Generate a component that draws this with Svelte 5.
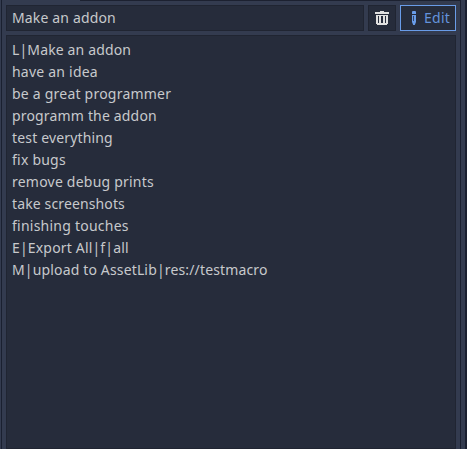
<script>
  let title = $state('Make an addon');
  const lines = [
    { text: 'L|Make an addon', tracking: 0.14 },
    { text: 'have an idea', tracking: 0.22 },
    { text: 'be a great programmer', tracking: 0.22 },
    { text: 'programm the addon', tracking: 0.17 },
    { text: 'test everything', tracking: 0.16 },
    { text: 'fix bugs', tracking: 0.23 },
    { text: 'remove debug prints', tracking: 0.22 },
    { text: 'take screenshots', tracking: 0.13 },
    { text: 'finishing touches', tracking: 0.24 },
    { text: 'E|Export All|f|all', tracking: 0.17 },
    { text: 'M|upload to AssetLib|res://testmacro', tracking: 0.15 }
  ];
</script>

<div class="window">
  <main class="dock">
    <div class="toolbar">
      <div class="field">{title}</div>
      <button class="delete" aria-label="Delete">
        <svg width="14" height="14" viewBox="0 0 14 14" shape-rendering="crispEdges">
          <path fill="#e0e0e0" fill-rule="evenodd" d="M5 0h4v1h5v2H0V1h5zM1 4h12v9h-1v1H2v-1H1zM3 5v7h1V5zM6 5v7h2V5zM10 5v7h1V5z" />
        </svg>
      </button>
      <button class="edit">
        <svg width="4" height="14" viewBox="0 0 4 14">
          <path fill="#699ce8" d="M1 0h2a1 1 0 0 1 1 1v2H0V1a1 1 0 0 1 1-1zM0 4h4v7l-1.2 3H1.2L0 11z" />
          <path fill="#262c3b" fill-opacity="0.75" d="M1 5h1v5H1z" />
        </svg>
        <span>Edit</span>
      </button>
    </div>
    <div class="editor">
      {#each lines as line}
        <div class="line" style="letter-spacing: {line.tracking}px">{line.text}</div>
      {/each}
    </div>
  </main>
  <div class="split"></div>
  <div class="outer"></div>
</div>

<style>
  .window {
    display: flex;
    box-sizing: border-box;
    width: 467px;
    height: 449px;
    overflow: hidden;
    padding-left: 2px;
    background: linear-gradient(90deg, #333b4f 1px, #1a2030 1px);
    font: 14px/22px 'Noto Sans', sans-serif;
    color: #c7c9cc;
  }
  .dock {
    display: flex;
    flex-direction: column;
    box-sizing: border-box;
    width: 458px;
    padding: 5px 4px 0;
    gap: 4px;
    background: linear-gradient(#1c2130, #1c2130) 78px 0 / 380px 1px no-repeat #333b4f;
  }
  .toolbar {
    display: flex;
    flex: none;
    gap: 4px;
    height: 26px;
  }
  .field,
  button,
  .editor {
    box-sizing: border-box;
    background: #262c3b;
    border: 1px solid #202532;
  }
  .field {
    width: 358px;
    padding: 1px 5px;
    letter-spacing: 0.15px;
    white-space: pre;
  }
  button {
    display: flex;
    align-items: center;
    margin: 0;
    padding: 0;
    font: inherit;
    line-height: 22px;
  }
  .delete {
    width: 28px;
    justify-content: center;
  }
  .edit {
    width: 56px;
    padding-left: 11px;
    gap: 8px;
    border-color: #699ce8;
    color: #6493dc;
    letter-spacing: 0.25px;
  }
  svg {
    display: block;
    flex: none;
  }
  .editor {
    flex: 1;
    padding: 3px 5px;
  }
  .line {
    height: 22px;
    font-variant-ligatures: none;
    white-space: pre;
  }
  .split {
    width: 4px;
    margin-left: 1px;
    background: #333b4f;
  }
  .outer {
    flex: 1;
    background: #1a2030;
  }
</style>
